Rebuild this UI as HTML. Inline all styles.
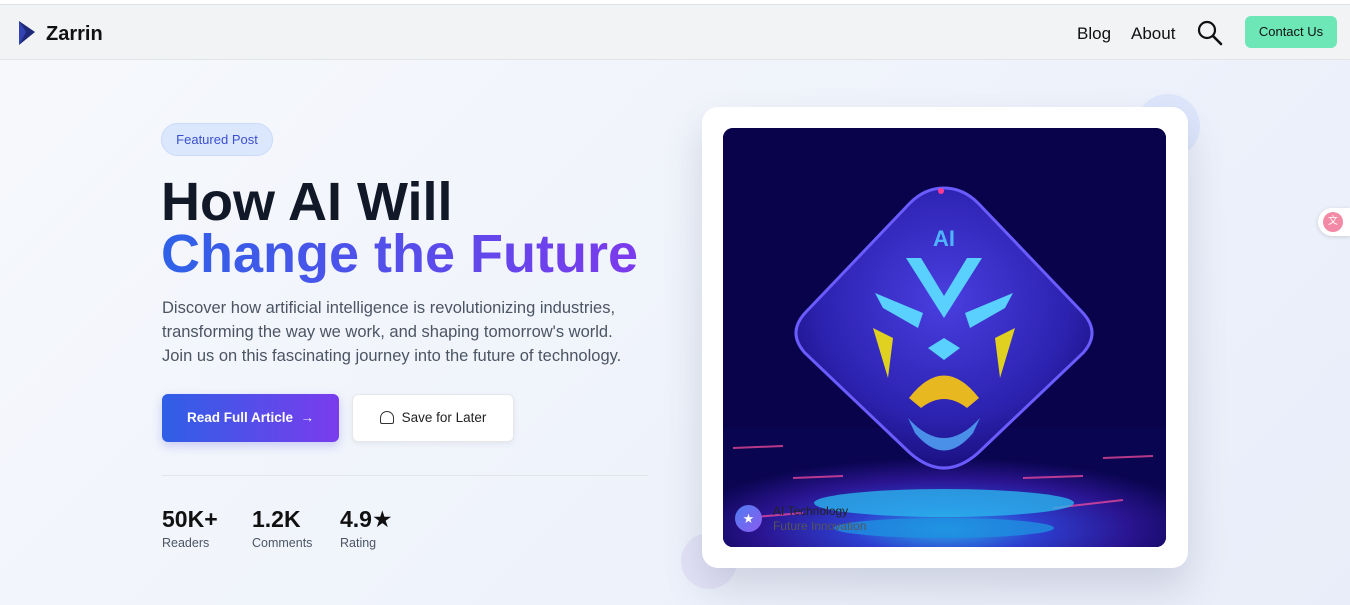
<!DOCTYPE html>
<html><head><meta charset="utf-8"><style>
*{margin:0;padding:0;box-sizing:border-box}
body{width:1350px;height:605px;overflow:hidden;font-family:"Liberation Sans","DejaVu Sans",sans-serif;background:linear-gradient(135deg,#f7f9fc 0%,#eef2fb 60%,#e9edf9 100%);position:relative}
.top{position:absolute;top:0;left:0;width:1350px;height:5px;background:#fff;border-bottom:1px solid #dfe1e5}
nav{position:absolute;top:5px;left:0;width:1350px;height:55px;background:#f2f3f5;border-bottom:1px solid #e1e3e7}
.logo{position:absolute;left:46px;top:18px;font-size:20px;font-weight:bold;color:#111}
.nl{position:absolute;top:19px;font-size:17px;color:#111}
.cbtn{position:absolute;left:1245px;top:11px;width:92px;height:32px;background:#6ee7b7;border-radius:6px;font-size:13px;color:#111;text-align:center;line-height:32px}
.badge{position:absolute;left:161px;top:123px;width:112px;height:33px;border-radius:17px;background:#dbe7fd;border:1px solid #c9dafa;color:#3b4fd0;font-size:13px;text-align:center;line-height:31px}
h1{position:absolute;left:161px;top:176px;font-size:54px;line-height:52px;font-weight:bold;color:#111827}
.grad{background:linear-gradient(90deg,#2f62e8,#7c3aed);-webkit-background-clip:text;color:transparent}
p.d{position:absolute;left:162px;top:296px;width:478px;font-size:16.5px;line-height:24px;color:#4b5563}
.b1{position:absolute;left:162px;top:394px;width:177px;height:48px;border-radius:6px;background:linear-gradient(90deg,#2f5fe6,#7a3ced);color:#fff;font-size:13.5px;font-weight:bold;text-align:center;line-height:48px;box-shadow:0 4px 10px rgba(80,80,220,.25)}
.b2{position:absolute;left:352px;top:394px;width:162px;height:48px;border-radius:6px;background:#fff;border:1px solid #e5e7eb;color:#222;font-size:13.5px;text-align:center;line-height:46px;box-shadow:0 2px 6px rgba(0,0,0,.06)}
.hr{position:absolute;left:162px;top:475px;width:486px;height:1px;background:#e2e5ea}
.st{position:absolute;top:506px}
.st b{display:block;font-size:23px;color:#111;font-weight:bold}
.st span{display:block;font-size:12.5px;color:#4b5563;margin-top:3px}
.c1{position:absolute;left:1136px;top:94px;width:64px;height:64px;border-radius:50%;background:#dde6fb}
.c2{position:absolute;left:681px;top:533px;width:56px;height:56px;border-radius:50%;background:#e4e3f7}
.card{position:absolute;left:702px;top:107px;width:486px;height:461px;background:#fff;border-radius:16px;box-shadow:0 20px 40px rgba(60,70,110,.18)}
.img{position:absolute;left:21px;top:21px;width:443px;height:419px;border-radius:10px;overflow:hidden;background:#07034a}
.tr{position:absolute;left:1318px;top:208px;width:32px;height:28px;background:#fff;border-radius:14px 0 0 14px;box-shadow:0 1px 4px rgba(0,0,0,.15)}
.tr i{position:absolute;left:5px;top:4px;width:20px;height:20px;border-radius:50%;background:#f28aa5;color:#fff;font-size:10px;font-style:normal;text-align:center;line-height:20px}
</style></head><body>
<div class="top"></div>
<nav>
<svg style="position:absolute;left:18px;top:15px" width="18" height="26" viewBox="0 0 18 26"><path d="M1 1 L17 12 L1 25 Z" fill="#1e2a78"/><path d="M1 1 L8 12 L1 25 Z" fill="#3443b4"/></svg>
<div class="logo">Zarrin</div>
<div class="nl" style="left:1077px">Blog</div>
<div class="nl" style="left:1131px">About</div>
<svg style="position:absolute;left:1197px;top:15px" width="26" height="26" viewBox="0 0 26 26"><circle cx="10" cy="10" r="8" fill="none" stroke="#111" stroke-width="2.2"/><line x1="16" y1="16" x2="24" y2="24" stroke="#111" stroke-width="2.6" stroke-linecap="round"/></svg>
<div class="cbtn">Contact Us</div>
</nav>
<div class="badge">Featured Post</div>
<h1>How AI Will<br><span class="grad">Change the Future</span></h1>
<p class="d">Discover how artificial intelligence is revolutionizing industries, transforming the way we work, and shaping tomorrow's world. Join us on this fascinating journey into the future of technology.</p>
<div class="b1">Read Full Article &nbsp;→</div>
<div class="b2"><span style="display:inline-block;width:14px;height:13px;border:1.6px solid #333;border-radius:7px 7px 2px 2px;vertical-align:-2px;margin-right:8px"></span>Save for Later</div>
<div class="hr"></div>
<div class="st" style="left:162px"><b>50K+</b><span>Readers</span></div>
<div class="st" style="left:252px"><b>1.2K</b><span>Comments</span></div>
<div class="st" style="left:340px"><b>4.9★</b><span>Rating</span></div>
<div class="c1"></div><div class="c2"></div>
<div class="card"><div class="img">
<svg width="443" height="419" viewBox="0 0 443 419">
<defs>
<radialGradient id="fl" cx="50%" cy="85%" r="60%"><stop offset="0" stop-color="#2aa8e8"/><stop offset=".35" stop-color="#2d3fd0"/><stop offset=".7" stop-color="#2a1490"/><stop offset="1" stop-color="#0a0550"/></radialGradient>
<radialGradient id="dm" cx="50%" cy="40%" r="60%"><stop offset="0" stop-color="#4a3ee0"/><stop offset=".7" stop-color="#2c22b0"/><stop offset="1" stop-color="#1a1080"/></radialGradient>
</defs>
<rect width="443" height="419" fill="#08034a"/>
<rect y="300" width="443" height="119" fill="url(#fl)"/>
<g stroke="#ff4fa0" stroke-width="2" opacity=".7"><line x1="10" y1="320" x2="60" y2="318"/><line x1="380" y1="330" x2="430" y2="328"/><line x1="20" y1="390" x2="80" y2="385"/><line x1="330" y1="380" x2="400" y2="372"/><line x1="70" y1="350" x2="120" y2="348"/><line x1="300" y1="350" x2="360" y2="348"/></g>
<ellipse cx="221" cy="375" rx="130" ry="14" fill="#2bb4ec" opacity=".8"/>
<ellipse cx="221" cy="400" rx="110" ry="10" fill="#1e90e0" opacity=".8"/>
<path d="M221 60 Q240 60 255 75 L360 185 Q378 205 360 225 L255 325 Q221 355 187 325 L82 225 Q64 205 82 185 L187 75 Q202 60 221 60Z" fill="url(#dm)" stroke="#6a5cff" stroke-width="3"/>
<text x="221" y="118" text-anchor="middle" font-size="22" font-weight="bold" fill="#4fb4ff" font-family="Liberation Sans">AI</text>
<path d="M183 130 L221 190 L259 130 L244 130 L221 168 L198 130Z" fill="#5ad0ff"/>
<path d="M152 165 L200 185 L195 200 L160 180Z M290 165 L242 185 L247 200 L282 180Z" fill="#5ad0ff"/>
<path d="M205 220 L221 210 L237 220 L221 232Z" fill="#5ad0ff"/>
<path d="M150 200 L170 210 L165 250 Z M292 200 L272 210 L277 250Z" fill="#e0d020"/>
<path d="M186 270 Q221 225 256 270 L244 280 Q221 262 198 280Z" fill="#e8b820"/>
<path d="M185 290 Q221 330 257 290 L250 305 Q221 340 192 305Z" fill="#4a90e8"/>
<circle cx="218" cy="63" r="3" fill="#ff3a90"/>
</svg>
<div style="position:absolute;left:12px;top:377px;width:27px;height:27px;border-radius:50%;background:linear-gradient(135deg,#4f7cf0,#8a5cf0);color:#fff;font-size:13px;text-align:center;line-height:27px">★</div>
<div style="position:absolute;left:50px;top:376px;font-size:12px;color:#222">AI Technology</div>
<div style="position:absolute;left:50px;top:391px;font-size:12px;color:#555">Future Innovation</div>
</div></div>
<div class="tr"><i>文</i></div>
</body></html>
